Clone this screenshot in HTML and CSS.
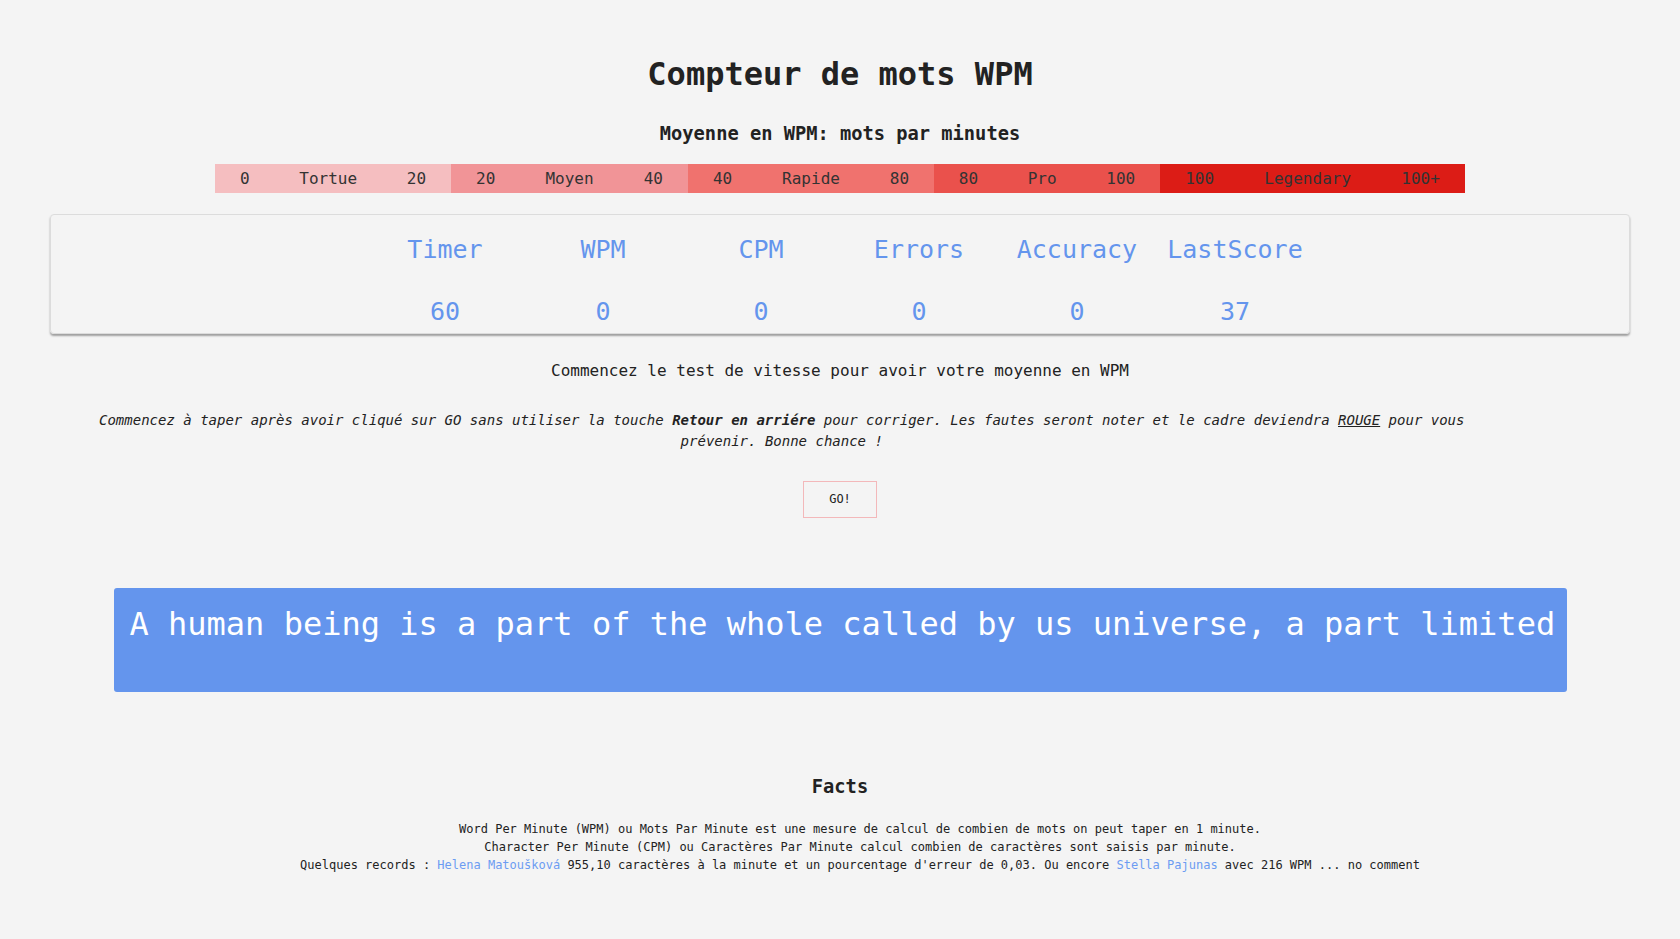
FILE: index.html
```html
<!DOCTYPE html>
<html lang="fr">
<head>
<meta charset="utf-8">
<title>Compteur de mots WPM</title>
<link rel="stylesheet" href="styles.css">
</head>
<body>
<main class="page">
  <h1 class="title">Compteur de mots WPM</h1>
  <h3 class="subtitle">Moyenne en WPM: mots par minutes</h3>

  <div class="scale">
    <div class="seg seg1"><span>0</span><span>Tortue</span><span>20</span></div>
    <div class="seg seg2"><span>20</span><span>Moyen</span><span>40</span></div>
    <div class="seg seg3"><span>40</span><span>Rapide</span><span>80</span></div>
    <div class="seg seg4"><span>80</span><span>Pro</span><span>100</span></div>
    <div class="seg seg5"><span>100</span><span>Legendary</span><span>100+</span></div>
  </div>

  <section class="stats">
    <div class="stat-label">Timer</div>
    <div class="stat-label">WPM</div>
    <div class="stat-label">CPM</div>
    <div class="stat-label">Errors</div>
    <div class="stat-label">Accuracy</div>
    <div class="stat-label">LastScore</div>
    <div class="stat-value">60</div>
    <div class="stat-value">0</div>
    <div class="stat-value">0</div>
    <div class="stat-value">0</div>
    <div class="stat-value">0</div>
    <div class="stat-value">37</div>
  </section>

  <p class="avg">Commencez le test de vitesse pour avoir votre moyenne en WPM</p>

  <p class="instructions">Commencez à taper après avoir cliqué sur GO sans utiliser la touche <b>Retour en arriére</b> pour corriger. Les fautes seront noter et le cadre deviendra <u>ROUGE</u> pour vous prévenir. Bonne chance !</p>

  <button class="go" type="button">GO!</button>

  <div class="quote">A human being is a part of the whole called by us universe, a part limited in time and space.</div>

  <h3 class="facts-title">Facts</h3>
  <p class="facts">Word Per Minute (WPM) ou Mots Par Minute est une mesure de calcul de combien de mots on peut taper en 1 minute.<br>Character Per Minute (CPM) ou Caractères Par Minute calcul combien de caractères sont saisis par minute.<br>Quelques records : <a href="#">Helena Matoušková</a> 955,10 caractères à la minute et un pourcentage d'erreur de 0,03. Ou encore <a href="#">Stella Pajunas</a> avec 216 WPM ... no comment</p>
</main>
</body>
</html>
```

FILE: styles.css
```css
html, body {
  background: #f4f4f4;
}

body {
  margin: 8px;
  font-family: "DejaVu Sans Mono", monospace;
  color: #222;
}

.page {
  padding-top: 48px;
  text-align: center;
}

.title {
  margin: 0;
  font-size: 32px;
  line-height: 37px;
  font-weight: bold;
  color: #222;
}

.subtitle {
  margin: 30px 0 0;
  font-size: 18.72px;
  line-height: 22px;
  font-weight: bold;
  color: #222;
}

.scale {
  width: 1250px;
  margin: 19px auto 0;
  display: flex;
  height: 29px;
  font-size: 16px;
  color: #333;
}

.seg {
  display: flex;
  align-items: center;
  justify-content: space-around;
}

.seg1 { width: 236px; background: #f5bec0; }
.seg2 { width: 237px; background: #f19497; }
.seg3 { width: 246px; background: #f0726e; }
.seg4 { width: 226px; background: #ea514c; }
.seg5 { flex: 1; background: #dc1c16; }

.stats {
  width: 95%;
  margin: 21px auto 0;
  box-sizing: border-box;
  border: 1px solid #dcdcdc;
  border-radius: 4px;
  box-shadow: 0 2px 2px rgba(0, 0, 0, 0.35);
  padding: 20px 0 7px;
  display: grid;
  grid-template-columns: repeat(6, 158px);
  justify-content: center;
  row-gap: 33px;
  font-size: 25px;
  line-height: 29px;
  color: #6495ed;
}

.avg {
  margin: 27px 0 0;
  font-size: 16px;
  line-height: 19px;
  color: #222;
}

.instructions {
  width: 85%;
  margin: 30px 0 0 4%;
  font-size: 14px;
  line-height: 21px;
  font-style: italic;
  color: #222;
}

.go {
  display: block;
  margin: 29px auto 0;
  padding: 10px 25px 11px;
  font-family: "DejaVu Sans Mono", monospace;
  font-size: 12px;
  line-height: 14px;
  color: #222;
  background: #f4f4f4;
  border: 1px solid #f3b8ba;
  border-radius: 0;
}

.quote {
  width: 1453px;
  height: 104px;
  margin: 70px auto 0;
  box-sizing: border-box;
  padding: 18px 16px 16px 16px;
  background: #6495ed;
  border-radius: 3px;
  color: #fff;
  font-size: 32px;
  line-height: 37px;
  text-align: left;
  white-space: nowrap;
  overflow: hidden;
}

.facts-title {
  margin: 84px 0 0;
  font-size: 18.72px;
  line-height: 22px;
  font-weight: bold;
  color: #222;
}

.facts {
  margin: 22px 0 0;
  padding-left: 40px;
  font-size: 12px;
  line-height: 18px;
  color: #222;
}

.facts a {
  color: #6c9cf2;
  text-decoration: none;
}
```
